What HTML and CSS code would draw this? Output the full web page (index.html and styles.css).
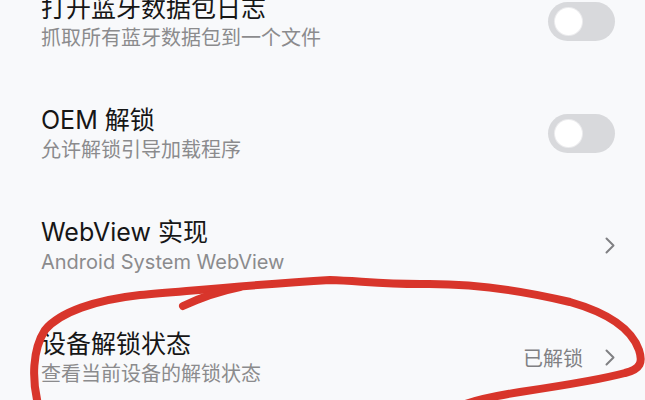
FILE: index.html
```
<!DOCTYPE html>
<html lang="zh-CN">
  <head>
    <meta charset="UTF-8" />
    <meta name="viewport" content="width=device-width, initial-scale=1.0" />
    <title>开发者选项</title>
    <link rel="stylesheet" href="styles.css">
  </head>
  <body>

      <div class="list">
          <div class="row">
              <div class="text">
                  <div class="title">打开蓝牙数据包日志</div>
                  <div class="summary">抓取所有蓝牙数据包到一个文件</div>
              </div>
              <div class="switch"><span class="knob"></span></div>
          </div>

          <div class="row">
              <div class="text">
                  <div class="title">OEM 解锁</div>
                  <div class="summary">允许解锁引导加载程序</div>
              </div>
              <div class="switch"><span class="knob"></span></div>
          </div>

          <div class="row">
              <div class="text">
                  <div class="title">WebView 实现</div>
                  <div class="summary">Android System WebView</div>
              </div>
              <svg class="chevron" viewBox="0 0 10 17"><path d="M1.5 1.5 L8.5 8.5 L1.5 15.5" /></svg>
          </div>

          <div class="row">
              <div class="text">
                  <div class="title">设备解锁状态</div>
                  <div class="summary">查看当前设备的解锁状态</div>
              </div>
              <span class="value">已解锁</span>
              <svg class="chevron" viewBox="0 0 10 17"><path d="M1.5 1.5 L8.5 8.5 L1.5 15.5" /></svg>
          </div>
      </div>

      <!-- hand drawn circle on top of the screenshot -->
      <svg class="scribble" viewBox="0 0 645 400">
          <path d="M38 404 C32 380, 32 350, 45 330 C60 312, 95 300, 140 295 C200 290, 260 284, 330 280 C360 281, 380 284, 420 284 C470 283, 520 290, 570 302 C612 314, 632 330, 639 350 C643 362, 641 369, 625 373 C600 380, 560 386, 520 392 C495 396, 475 400, 460 406" />
          <path d="M183 306 C200 298, 215 292, 240 287" />
      </svg>

  </body>
</html>
```

FILE: styles.css
```
html, body {
    margin: 0;
    height: 100%;
    overflow: hidden;
    background: #f8f9fb;
}

body {
    position: relative;
    font-family: Inter, "Noto Sans CJK SC", sans-serif;
}

.list {
    margin-top: -35px;
}

.row {
    display: flex;
    align-items: center;
    height: 112px;
    padding: 0 30px 0 41px;
}

.text {
    flex: 1;
    padding-top: 3px;
}

.title {
    font-size: 25px;
    line-height: 31px;
    color: #161616;
}

.summary {
    font-size: 20px;
    line-height: 29px;
    color: #8b8b8d;
}

.switch {
    width: 67px;
    height: 39px;
    border-radius: 20px;
    background: #d8d9dc;
    display: flex;
    align-items: center;
    padding-left: 7px;
    box-sizing: border-box;
}

.knob {
    width: 27px;
    height: 27px;
    border-radius: 50%;
    background: #fff;
    box-shadow: 0 0 0 1px #ececee;
}

.value {
    font-size: 20px;
    color: #808083;
    margin-right: 22px;
}

.chevron {
    width: 10px;
    height: 17px;
}

.chevron path {
    fill: none;
    stroke: #808083;
    stroke-width: 2;
    stroke-linecap: round;
    stroke-linejoin: round;
}

.scribble {
    position: absolute;
    top: 0;
    left: 0;
    width: 645px;
    height: 400px;
    pointer-events: none;
}

.scribble path {
    fill: none;
    stroke: #d8352b;
    stroke-width: 8;
    stroke-linecap: round;
    stroke-linejoin: round;
}
```
